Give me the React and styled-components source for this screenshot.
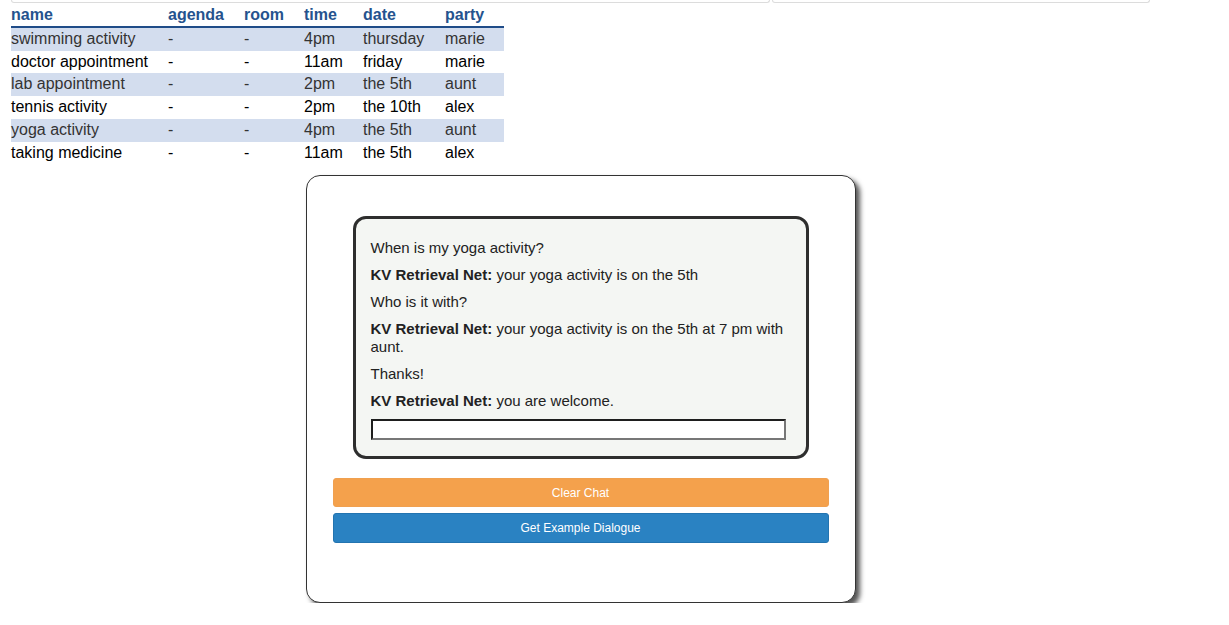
import styled, { createGlobalStyle } from 'styled-components';

const GlobalStyle = createGlobalStyle`
  body {
    margin: 0;
    background: #fff;
    font-family: "Liberation Sans", Arial, sans-serif;
  }
`

const Page = styled.div`
  width: 1139px;
  margin-left: 11px;
`

const TopRow = styled.div`
  display: flex;
  gap: 2px;
`

const TopPanel = styled.div`
  flex: ${props => props.grow};
  height: 2px;
  border: 1px solid #dcdcdc;
  border-top: none;
  border-radius: 0 0 3px 3px;
`

const Schedule = styled.table`
  border-collapse: collapse;
  font-size: 16px;
  margin-top: 1px;
`

const HeadCell = styled.th`
  text-align: left;
  font-weight: bold;
  color: #25538e;
  line-height: 21px;
  padding: 0 0 1px;
  width: ${props => props.w}px;
  border-bottom: 2px solid #1f4c88;
`

const Row = styled.tr`
  background: ${props => (props.shaded ? '#d3ddee' : '#fff')};
  color: ${props => (props.shaded ? '#333' : '#000')};
`

const Cell = styled.td`
  padding: 0;
  line-height: 22.7px;
  white-space: nowrap;
`

const Card = styled.div`
  box-sizing: border-box;
  width: 550px;
  margin: 11px auto 0;
  padding: 40px 26px 59px;
  border: 1px solid #333;
  border-radius: 14px;
  box-shadow: 4px 4px 5px #555;
  background: #fff;
`

const ChatBox = styled.div`
  margin: 0 20px;
  padding: 20px 20px 16px 15px;
  border: 3px solid #2e2e2e;
  border-radius: 13px;
  background: #f4f6f3;
  font-size: 15px;
  color: #222;
`

const Message = styled.div`
  line-height: 18px;
  margin-bottom: 9px;

  b {
    font-weight: bold;
  }
`

const ChatInput = styled.input`
  display: block;
  box-sizing: border-box;
  width: 100%;
  height: 21px;
  margin: 0;
  border: 2px solid #1e1e1e;
  border-bottom-color: #777;
  border-right-color: #777;
  background: #fff;
`

const Actions = styled.div`
  display: flex;
  flex-direction: column;
  gap: 6px;
  margin-top: 19px;
`

const ActionButton = styled.button`
  height: ${props => props.h}px;
  border: 1px solid ${props => props.edge};
  border-radius: 3px;
  background: ${props => props.bg};
  color: #fff;
  font-family: "Liberation Sans", Arial, sans-serif;
  font-size: 12px;
  cursor: pointer;
`

const columns = [
  { key: 'name', w: 157 },
  { key: 'agenda', w: 76 },
  { key: 'room', w: 60 },
  { key: 'time', w: 59 },
  { key: 'date', w: 82 },
  { key: 'party', w: 59 },
]

const rows = [
  ['swimming activity', '-', '-', '4pm', 'thursday', 'marie'],
  ['doctor appointment', '-', '-', '11am', 'friday', 'marie'],
  ['lab appointment', '-', '-', '2pm', 'the 5th', 'aunt'],
  ['tennis activity', '-', '-', '2pm', 'the 10th', 'alex'],
  ['yoga activity', '-', '-', '4pm', 'the 5th', 'aunt'],
  ['taking medicine', '-', '-', '11am', 'the 5th', 'alex'],
]

const dialogue = [
  { who: null, text: 'When is my yoga activity?' },
  { who: 'KV Retrieval Net:', text: 'your yoga activity is on the 5th' },
  { who: null, text: 'Who is it with?' },
  { who: 'KV Retrieval Net:', text: 'your yoga activity is on the 5th at 7 pm with aunt.' },
  { who: null, text: 'Thanks!' },
  { who: 'KV Retrieval Net:', text: 'you are welcome.' },
]

function App() {
  return (
    <>
      <GlobalStyle />
      <Page>
        <TopRow>
          <TopPanel grow={760} />
          <TopPanel grow={377} />
        </TopRow>

        <Schedule>
          <thead>
            <tr>
              {columns.map(col => (
                <HeadCell key={col.key} w={col.w}>{col.key}</HeadCell>
              ))}
            </tr>
          </thead>
          <tbody>
            {rows.map((row, index) => (
              <Row key={index} shaded={index % 2 === 0}>
                {row.map((value, i) => (
                  <Cell key={i}>{value}</Cell>
                ))}
              </Row>
            ))}
          </tbody>
        </Schedule>

        <Card>
          <ChatBox>
            {dialogue.map((line, index) => (
              <Message key={index}>
                {line.who && <b>{line.who} </b>}
                {line.text}
              </Message>
            ))}
            <ChatInput type="text" />
          </ChatBox>
          <Actions>
            <ActionButton h={29} bg="#f4a14c" edge="#f0a050">Clear Chat</ActionButton>
            <ActionButton h={30} bg="#2a82c2" edge="#2374b0">Get Example Dialogue</ActionButton>
          </Actions>
        </Card>
      </Page>
    </>
  )
}

export default App
